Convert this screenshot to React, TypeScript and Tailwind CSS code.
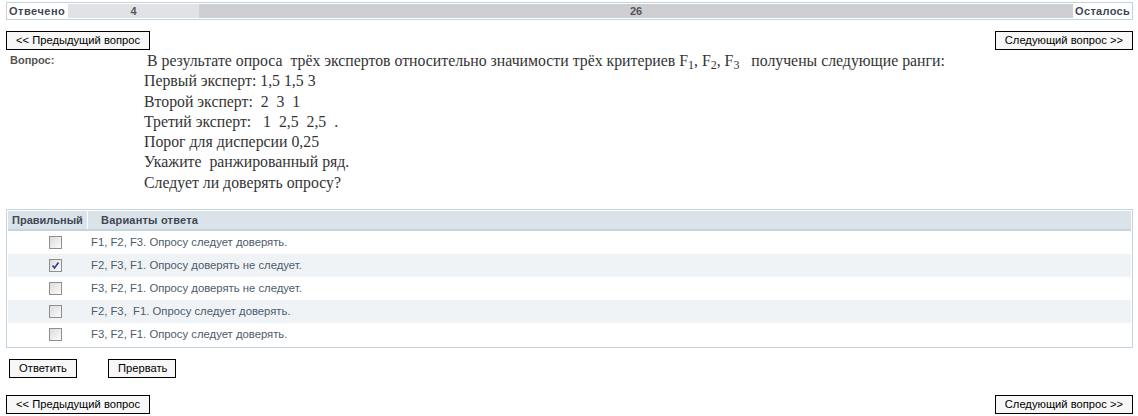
const ui = { fontFamily: '"Liberation Sans", Arial, sans-serif' };
const serif = { fontFamily: '"Liberation Serif", "Times New Roman", serif' };

const options = [
  { text: 'F1, F2, F3. Опросу следует доверять.', checked: false },
  { text: 'F2, F3, F1. Опросу доверять не следует.', checked: true },
  { text: 'F3, F2, F1. Опросу доверять не следует.', checked: false },
  { text: 'F2, F3,  F1. Опросу следует доверять.', checked: false },
  { text: 'F3, F2, F1. Опросу следует доверять.', checked: false },
];

function Btn({ children, className = '' }: { children: React.ReactNode; className?: string }) {
  return (
    <button
      className={`h-[19px] border border-black bg-[#f7f7f7] px-[9px] text-[11.2px] leading-[17px] text-black whitespace-pre ${className}`}
      style={ui}
    >
      {children}
    </button>
  );
}

function Nav() {
  return (
    <div className="flex justify-between">
      <Btn>{'<< Предыдущий вопрос'}</Btn>
      <Btn>{'Следующий вопрос >>'}</Btn>
    </div>
  );
}

function Checkbox({ checked }: { checked: boolean }) {
  return (
    <div className="w-[13px] h-[13px] border border-[#8f8f8f] bg-gradient-to-br from-[#dcdcdc] to-[#fbfbfb] flex items-center justify-center">
      {checked && (
        <svg width="9" height="9" viewBox="0 0 9 9">
          <path d="M1.5 4.5 L3.5 7 L7.5 1.5" fill="none" stroke="#2b3f8c" strokeWidth="1.6" />
        </svg>
      )}
    </div>
  );
}

export default function App() {
  return (
    <div className="w-[1138px] h-[416px] bg-white pl-[6px] pr-[5px] pt-[2px]" style={ui}>
      {/* progress */}
      <div className="flex h-[18px] border border-[#c3d3de] p-[1px] text-[11px] font-bold leading-[14px] text-[#3f4854]">
        <div className="w-[60px] pl-[1px] tracking-[0.5px]">Отвечено</div>
        <div className="w-[131px] bg-[#e1e2e6] text-center text-[#555]">4</div>
        <div className="flex-1 bg-[#cfced3] text-center text-[#555]">26</div>
        <div className="w-[58px] text-right pr-[1px] tracking-[0.3px]">Осталось</div>
      </div>

      <div className="mt-[11px]">
        <Nav />
      </div>

      {/* question */}
      <div className="flex h-[159px]">
        <div className="w-[138px] pl-[4px] pt-[2px] text-[11px] font-bold text-[#555]">Вопрос:</div>
        <div className="pt-[1px] text-[15.8px] leading-[20.3px] text-[#333]" style={serif}>
          <p className="pl-[3px] whitespace-pre">
            {'В результате опроса  трёх экспертов относительно значимости трёх критериев F'}
            <sub className="text-[12px]">1</sub>, F<sub className="text-[12px]">2</sub>, F
            <sub className="text-[12px]">3</sub>
            {'   получены следующие ранги:'}
          </p>
          <p className="whitespace-pre">Первый эксперт: 1,5 1,5 3</p>
          <p className="whitespace-pre">Второй эксперт:  2  3  1</p>
          <p className="whitespace-pre">Третий эксперт:   1  2,5  2,5  .</p>
          <p className="whitespace-pre">Порог для дисперсии 0,25</p>
          <p className="whitespace-pre">Укажите  ранжированный ряд.</p>
          <p className="whitespace-pre">Следует ли доверять опросу?</p>
        </div>
      </div>

      {/* answers table */}
      <div className="border border-[#c5d3dd] p-[1px]">
        <div className="flex h-[18px] bg-[#dbe3ea] text-[11px] font-bold leading-[18px] text-[#3f4854] border-b-[2px] border-[#c5d3dd] box-content">
          <div className="w-[80px] pl-[4px] border-r border-white">Правильный</div>
          <div className="pl-[13px] tracking-[0.2px]">Варианты ответа</div>
        </div>
        {options.map((o, i) => (
          <div
            key={i}
            className={`flex h-[23px] items-center text-[11.3px] text-[#4d5b6b] ${i % 2 === 1 ? 'bg-[#eff3f6]' : 'bg-white'}`}
          >
            <div className="w-[83px] flex justify-center pl-[11px]">
              <Checkbox checked={o.checked} />
            </div>
            <div className="whitespace-pre">{o.text}</div>
          </div>
        ))}
      </div>

      <div className="mt-[11px] flex gap-[31px] pl-[3px]">
        <Btn className="w-[68px] px-0">Ответить</Btn>
        <Btn className="w-[68px] px-0">Прервать</Btn>
      </div>

      <div className="mt-[17px]">
        <Nav />
      </div>
    </div>
  );
}
